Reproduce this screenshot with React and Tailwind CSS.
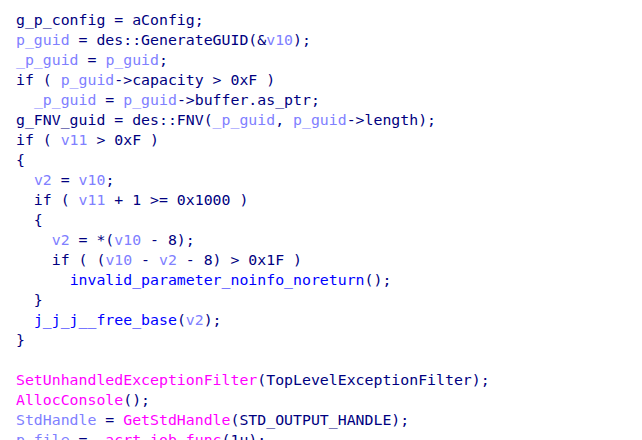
import React from 'react';

// token kinds: n = plain (navy), v = local variable, f = user function, i = import
const color = {
  n: 'text-[#000080]',
  v: 'text-[#8080ff]',
  f: 'text-[#0000ff]',
  i: 'text-[#ff00ff]',
};

const lines = [
  [['n', 'g_p_config = aConfig;']],
  [['v', 'p_guid'], ['n', ' = des::GenerateGUID(&'], ['v', 'v10'], ['n', ');']],
  [['v', '_p_guid'], ['n', ' = '], ['v', 'p_guid'], ['n', ';']],
  [['n', 'if ( '], ['v', 'p_guid'], ['n', '->capacity > 0xF )']],
  [['n', '  '], ['v', '_p_guid'], ['n', ' = '], ['v', 'p_guid'], ['n', '->buffer.as_ptr;']],
  [['n', 'g_FNV_guid = des::FNV('], ['v', '_p_guid'], ['n', ', '], ['v', 'p_guid'], ['n', '->length);']],
  [['n', 'if ( '], ['v', 'v11'], ['n', ' > 0xF )']],
  [['n', '{']],
  [['n', '  '], ['v', 'v2'], ['n', ' = '], ['v', 'v10'], ['n', ';']],
  [['n', '  if ( '], ['v', 'v11'], ['n', ' + 1 >= 0x1000 )']],
  [['n', '  {']],
  [['n', '    '], ['v', 'v2'], ['n', ' = *('], ['v', 'v10'], ['n', ' - 8);']],
  [['n', '    if ( ('], ['v', 'v10'], ['n', ' - '], ['v', 'v2'], ['n', ' - 8) > 0x1F )']],
  [['n', '      '], ['f', 'invalid_parameter_noinfo_noreturn'], ['n', '();']],
  [['n', '  }']],
  [['n', '  '], ['f', 'j_j_j__free_base'], ['n', '('], ['v', 'v2'], ['n', ');']],
  [['n', '}']],
  [],
  [['i', 'SetUnhandledExceptionFilter'], ['n', '(TopLevelExceptionFilter);']],
  [['i', 'AllocConsole'], ['n', '();']],
  [['v', 'StdHandle'], ['n', ' = '], ['i', 'GetStdHandle'], ['n', '(STD_OUTPUT_HANDLE);']],
  [['v', 'p_file'], ['n', ' = '], ['i', '_acrt_iob_func'], ['n', '(1u);']],
];

export default function App() {
  return (
    <div className="w-[642px] h-[440px] overflow-hidden bg-white pt-[10px] pl-4 font-['DejaVu_Sans_Mono','Liberation_Mono',monospace] text-[14.85px] leading-[20px]">
      {lines.map((line, i) => (
        <div key={i} className="h-5 whitespace-pre">
          {line.map(([k, t], j) => (
            <span key={j} className={color[k]}>{t}</span>
          ))}
        </div>
      ))}
    </div>
  );
}
